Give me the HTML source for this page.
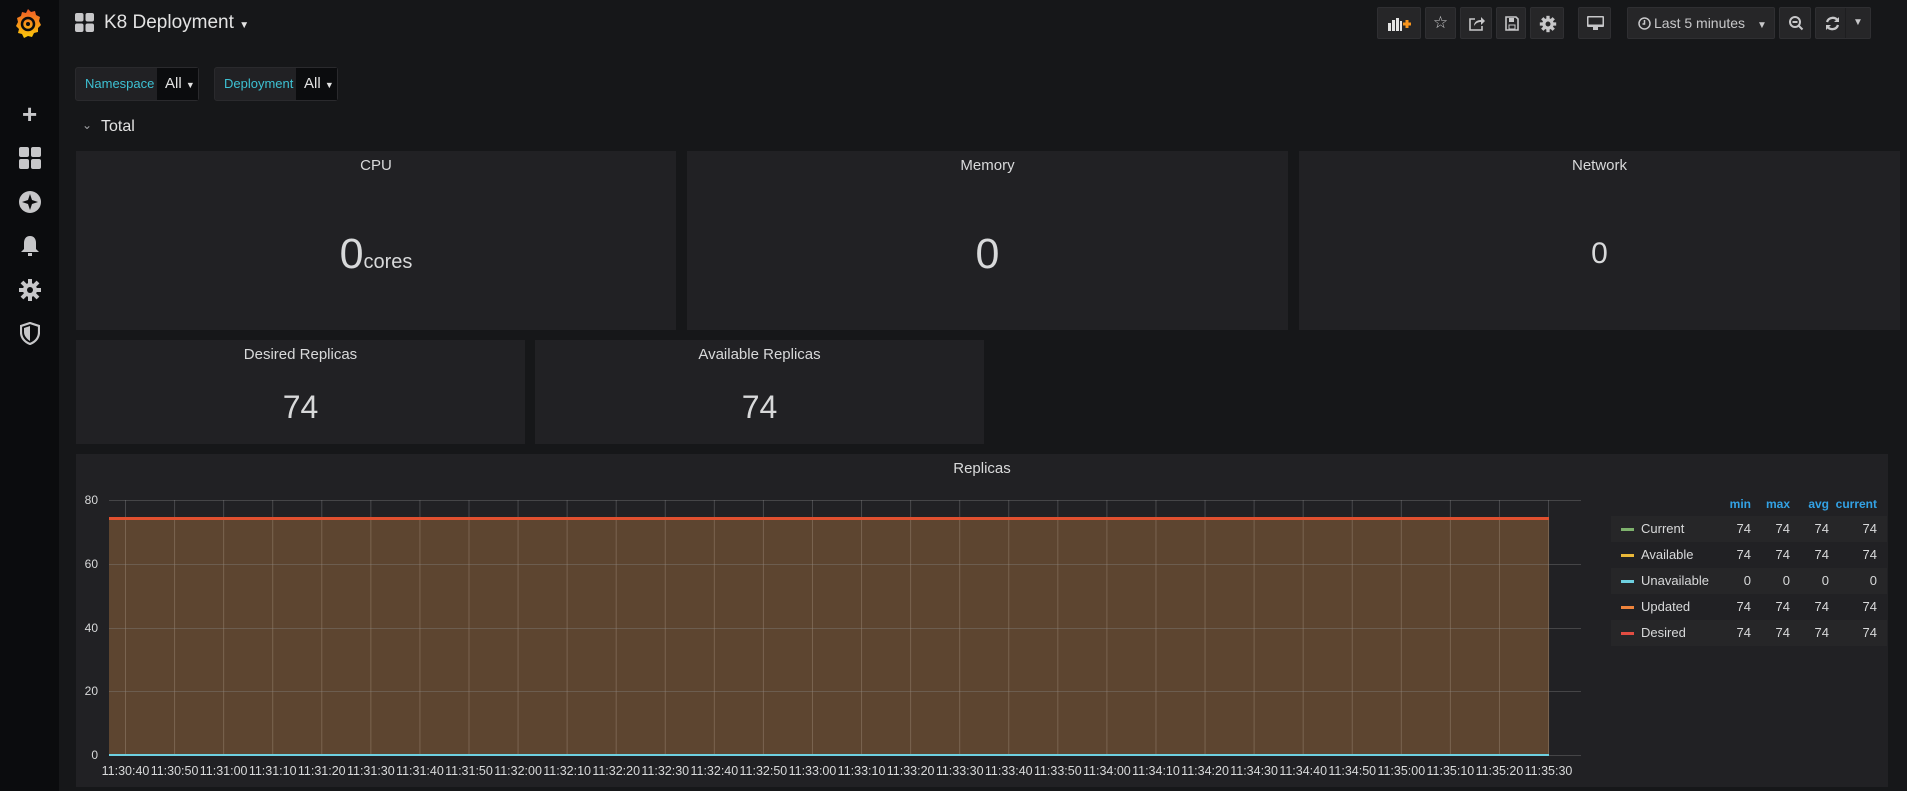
<!DOCTYPE html>
<html><head><meta charset="utf-8"><style>
*{box-sizing:border-box;margin:0;padding:0}
body{width:1907px;height:791px;background:#161719;font-family:"Liberation Sans",sans-serif;color:#d8d9da;position:relative;overflow:hidden}
.side{position:absolute;left:0;top:0;width:59px;height:791px;background:#0b0c0e}
.abs{position:absolute}
.btn{position:absolute;top:7px;height:32px;background:#262628;border:1px solid #2f2f32;border-radius:2px}
.panel{position:absolute;background:#212124}
.pt{position:absolute;left:0;right:0;top:6px;text-align:center;font-size:15px;color:#d8d9da}
.big{position:absolute;left:0;right:0;text-align:center;color:#d8d9da}
.var{position:absolute;top:67px;height:34px;background:#212124;border:1px solid #2a2a2d;border-radius:3px;font-size:13px}
.var .l{position:absolute;left:0;top:0;height:32px;line-height:32px;padding-left:9px;color:#3dc1d3}
.var .v{position:absolute;top:0;height:32px;line-height:32px;background:#0b0c0e;color:#e3e3e3;font-size:15px;padding-left:8px}
.lg{position:absolute;left:1611px;width:276px;height:26px;font-size:13px;line-height:26px;color:#d8d9da}
.lg.o{background:#262628}
.lg span{position:absolute;text-align:right}
</style></head><body>
<div class="side"></div>
<svg class="abs" style="left:13px;top:7px" width="30" height="32" viewBox="0 0 30 32">
<defs><linearGradient id="g" x1="0" y1="1" x2="0" y2="0"><stop offset="0" stop-color="#fbca0a"/><stop offset="1" stop-color="#f05a28"/></linearGradient></defs>
<path d="M15 2l3 3 4-1 1 4 4 2-1 4 2 4-3 3 0 4-4 1-2 4-4-1-4 2-2-4-4-1 1-4-3-3 2-4-1-4 4-2 1-4 4 1z" fill="url(#g)"/>
<circle cx="15" cy="17" r="6" fill="none" stroke="#0b0c0e" stroke-width="2.5"/><circle cx="15" cy="17" r="2" fill="#0b0c0e"/></svg>
<div class="abs" style="left:22px;top:104px;font-size:26px;color:#c7c7c9;line-height:20px;font-weight:bold">+</div>
<svg class="abs" style="left:19px;top:147px" width="22" height="22"><rect x="0" y="0" width="10" height="10" rx="2" fill="#c7c7c9"/><rect x="12" y="0" width="10" height="10" rx="2" fill="#c7c7c9"/><rect x="0" y="12" width="10" height="10" rx="2" fill="#c7c7c9"/><rect x="12" y="12" width="10" height="10" rx="2" fill="#c7c7c9"/></svg>
<svg class="abs" style="left:19px;top:191px" width="22" height="22"><circle cx="11" cy="11" r="11" fill="#c7c7c9"/><path d="M11 3l2 6 6 2-6 2-2 6-2-6-6-2 6-2z" fill="#0b0c0e"/></svg>
<svg class="abs" style="left:20px;top:235px" width="20" height="22"><path d="M10 1c-4 0-6 3-6 7v6l-3 3h18l-3-3V8c0-4-2-7-6-7z" fill="#c7c7c9"/><rect x="8" y="18" width="4" height="3" fill="#c7c7c9"/></svg>
<svg class="abs" style="left:19px;top:279px" width="22" height="22" viewBox="0 0 22 22"><circle cx="11" cy="11" r="7" fill="#c7c7c9"/><g stroke="#c7c7c9" stroke-width="4"><line x1="11" y1="0" x2="11" y2="22"/><line x1="0" y1="11" x2="22" y2="11"/><line x1="3" y1="3" x2="19" y2="19"/><line x1="19" y1="3" x2="3" y2="19"/></g><circle cx="11" cy="11" r="3" fill="#0b0c0e"/></svg>
<svg class="abs" style="left:20px;top:322px" width="20" height="23"><path d="M10 1L1 4v6c0 6 4 10 9 12 5-2 9-6 9-12V4z" fill="none" stroke="#c7c7c9" stroke-width="2.2"/><path d="M10 4v15c-3-2-6-5-6-9V6z" fill="#c7c7c9"/></svg>

<svg class="abs" style="left:75px;top:13px" width="19" height="19"><rect x="0" y="0" width="8.5" height="8.5" rx="2" fill="#c7c7c9"/><rect x="10.5" y="0" width="8.5" height="8.5" rx="2" fill="#c7c7c9"/><rect x="0" y="10.5" width="8.5" height="8.5" rx="2" fill="#c7c7c9"/><rect x="10.5" y="10.5" width="8.5" height="8.5" rx="2" fill="#c7c7c9"/></svg>
<div class="abs" style="left:104px;top:12px;font-size:19px;color:#e3e3e3">K8 Deployment <span style="font-size:10px">▼</span></div>

<div class="btn" style="left:1377px;width:44px"><svg class="abs" style="left:10px;top:8px" width="24" height="16"><rect x="0" y="7" width="3" height="8" fill="#e3e3e3"/><rect x="4" y="4" width="3" height="11" fill="#e3e3e3"/><rect x="8" y="2" width="3" height="13" fill="#e3e3e3"/><rect x="12" y="5" width="2" height="10" fill="#e3e3e3"/><path d="M15 8h8M19 4v8" stroke="#f7941d" stroke-width="3"/></svg></div>
<div class="btn" style="left:1425px;width:31px;color:#c7c7c9;font-size:17px;text-align:center;line-height:29px">☆</div>
<div class="btn" style="left:1460px;width:32px"><svg class="abs" style="left:8px;top:8px" width="16" height="15"><path d="M6 3H1v11h12V10" fill="none" stroke="#c7c7c9" stroke-width="1.6"/><path d="M5 10c0-4 3-6 7-6V1l4 4-4 4V6c-3 0-5 1-7 4z" fill="#c7c7c9"/></svg></div>
<div class="btn" style="left:1496px;width:30px"><svg class="abs" style="left:8px;top:8px" width="14" height="15"><path d="M1 1h10l2 2v11H1z" fill="none" stroke="#c7c7c9" stroke-width="1.6"/><rect x="4" y="2" width="5" height="4" fill="#c7c7c9"/><rect x="4" y="9" width="6" height="4" fill="none" stroke="#c7c7c9"/></svg></div>
<div class="btn" style="left:1530px;width:34px"><svg class="abs" style="left:8px;top:7px" width="18" height="18" viewBox="0 0 22 22"><circle cx="11" cy="11" r="7" fill="#c7c7c9"/><g stroke="#c7c7c9" stroke-width="4"><line x1="11" y1="1" x2="11" y2="21"/><line x1="1" y1="11" x2="21" y2="11"/><line x1="4" y1="4" x2="18" y2="18"/><line x1="18" y1="4" x2="4" y2="18"/></g><circle cx="11" cy="11" r="3" fill="#262628"/></svg></div>
<div class="btn" style="left:1578px;width:33px"><svg class="abs" style="left:8px;top:8px" width="17" height="15"><rect x="0" y="0" width="17" height="11" rx="1" fill="#c7c7c9"/><rect x="6" y="11" width="5" height="3" fill="#c7c7c9"/><rect x="1.5" y="1.5" width="14" height="7" fill="#262628"/></svg></div>
<div class="btn" style="left:1627px;width:148px;font-size:14px;color:#c7c7c9;line-height:30px;padding-left:26px">Last 5 minutes <span style="font-size:10px;margin-left:8px">▼</span><svg class="abs" style="left:10px;top:9px" width="13" height="13"><circle cx="6.5" cy="6.5" r="5.5" fill="none" stroke="#c7c7c9" stroke-width="1.5"/><path d="M6.5 3v4h-2" fill="none" stroke="#c7c7c9" stroke-width="1.5"/></svg></div>
<div class="btn" style="left:1779px;width:32px"><svg class="abs" style="left:9px;top:8px" width="15" height="16"><circle cx="6" cy="6" r="5" fill="none" stroke="#c7c7c9" stroke-width="2"/><path d="M3.5 6h5M9.5 9.5l4 4" stroke="#c7c7c9" stroke-width="2"/></svg></div>
<div class="btn" style="left:1815px;width:56px"><svg class="abs" style="left:9px;top:8px" width="15" height="15"><path d="M13 5A6 6 0 0 0 2 6M2 10a6 6 0 0 0 11-1" fill="none" stroke="#c7c7c9" stroke-width="2.3"/><path d="M14 1v5h-5zM1 14V9h5z" fill="#c7c7c9"/></svg><div class="abs" style="left:29px;top:0;width:1px;height:30px;background:#1e1e20"></div><span class="abs" style="left:37px;top:9px;font-size:10px;color:#c7c7c9">▼</span></div>

<div class="var" style="left:75px;width:124px"><div class="l">Namespace</div><div class="v" style="left:81px;width:41px">All <span style="font-size:9px">▼</span></div></div>
<div class="var" style="left:214px;width:124px"><div class="l">Deployment</div><div class="v" style="left:81px;width:41px">All <span style="font-size:9px">▼</span></div></div>

<div class="abs" style="left:82px;top:118px;font-size:12px;color:#9fa0a3">⌄</div>
<div class="abs" style="left:101px;top:118px;font-size:16px;color:#e3e3e3">Total</div>

<div class="panel" style="left:76px;top:151px;width:600px;height:179px"><div class="pt">CPU</div><div class="big" style="top:79px;font-size:43px;line-height:48px">0<span style="font-size:20px">cores</span></div></div>
<div class="panel" style="left:687px;top:151px;width:601px;height:179px"><div class="pt">Memory</div><div class="big" style="top:79px;font-size:43px;line-height:48px">0</div></div>
<div class="panel" style="left:1299px;top:151px;width:601px;height:179px"><div class="pt">Network</div><div class="big" style="top:86px;font-size:30px;line-height:34px">0</div></div>
<div class="panel" style="left:76px;top:340px;width:449px;height:104px"><div class="pt">Desired Replicas</div><div class="big" style="top:49px;font-size:32px;line-height:36px">74</div></div>
<div class="panel" style="left:535px;top:340px;width:449px;height:104px"><div class="pt">Available Replicas</div><div class="big" style="top:49px;font-size:32px;line-height:36px">74</div></div>

<div class="panel" style="left:76px;top:454px;width:1812px;height:333px"><div class="pt">Replicas</div></div>
<svg class="abs" style="left:0;top:0" width="1907" height="791" font-family="Liberation Sans" font-size="12" fill="#d8d9da">
<rect x="109" y="518" width="1440" height="237" fill="#5d4530"/>
<g id="vl" stroke-width="1"></g>
<g stroke="#8a8a8a" stroke-opacity="0.35" stroke-width="1">
<line x1="109" y1="500.5" x2="1581" y2="500.5"/><line x1="109" y1="564.5" x2="1581" y2="564.5"/><line x1="109" y1="628.5" x2="1581" y2="628.5"/><line x1="109" y1="691.5" x2="1581" y2="691.5"/><line x1="109" y1="755.5" x2="1581" y2="755.5"/>
</g>
<rect x="109" y="517" width="1440" height="3" fill="#e0502f"/>
<rect x="109" y="754" width="1440" height="2" fill="#6ed0e0"/>
<g text-anchor="end" font-size="12"><text x="98" y="504">80</text><text x="98" y="568">60</text><text x="98" y="632">40</text><text x="98" y="695">20</text><text x="98" y="759">0</text></g>
<g id="tl" text-anchor="middle" font-size="12.5"></g>
</svg>
<script>
var vl=document.getElementById('vl'),tl=document.getElementById('tl'),ns='http://www.w3.org/2000/svg';
for(var i=0;i<30;i++){var x=125.5+i*49.07;
var l=document.createElementNS(ns,'line');l.setAttribute('x1',x);l.setAttribute('x2',x);l.setAttribute('y1',519);l.setAttribute('y2',755);l.setAttribute('stroke','#7a6450');vl.appendChild(l);
var l2=document.createElementNS(ns,'line');l2.setAttribute('x1',x);l2.setAttribute('x2',x);l2.setAttribute('y1',500);l2.setAttribute('y2',518);l2.setAttribute('stroke','#48484b');vl.appendChild(l2);
var s=40+i*10,m=30+Math.floor(s/60),ss=s%60;var t=document.createElementNS(ns,'text');t.setAttribute('x',x);t.setAttribute('y',775);t.textContent='11:'+m+':'+(ss<10?'0':'')+ss;tl.appendChild(t);}
</script>
<div class="abs" style="left:1611px;top:497px;width:276px;height:16px;font-size:12px;color:#33a2e5;font-weight:bold">
<span class="abs" style="right:136px">min</span><span class="abs" style="right:97px">max</span><span class="abs" style="right:58px">avg</span><span class="abs" style="right:10px">current</span></div>
<div class="lg o" style="top:516px"><i class="abs" style="left:10px;top:12px;width:13px;height:3px;background:#7eb26d"></i><b class="abs" style="left:30px;font-weight:normal">Current</b><span style="right:136px">74</span><span style="right:97px">74</span><span style="right:58px">74</span><span style="right:10px">74</span></div>
<div class="lg" style="top:542px"><i class="abs" style="left:10px;top:12px;width:13px;height:3px;background:#eab839"></i><b class="abs" style="left:30px;font-weight:normal">Available</b><span style="right:136px">74</span><span style="right:97px">74</span><span style="right:58px">74</span><span style="right:10px">74</span></div>
<div class="lg o" style="top:568px"><i class="abs" style="left:10px;top:12px;width:13px;height:3px;background:#6ed0e0"></i><b class="abs" style="left:30px;font-weight:normal">Unavailable</b><span style="right:136px">0</span><span style="right:97px">0</span><span style="right:58px">0</span><span style="right:10px">0</span></div>
<div class="lg" style="top:594px"><i class="abs" style="left:10px;top:12px;width:13px;height:3px;background:#ef843c"></i><b class="abs" style="left:30px;font-weight:normal">Updated</b><span style="right:136px">74</span><span style="right:97px">74</span><span style="right:58px">74</span><span style="right:10px">74</span></div>
<div class="lg o" style="top:620px"><i class="abs" style="left:10px;top:12px;width:13px;height:3px;background:#e24d42"></i><b class="abs" style="left:30px;font-weight:normal">Desired</b><span style="right:136px">74</span><span style="right:97px">74</span><span style="right:58px">74</span><span style="right:10px">74</span></div>
</body></html>
